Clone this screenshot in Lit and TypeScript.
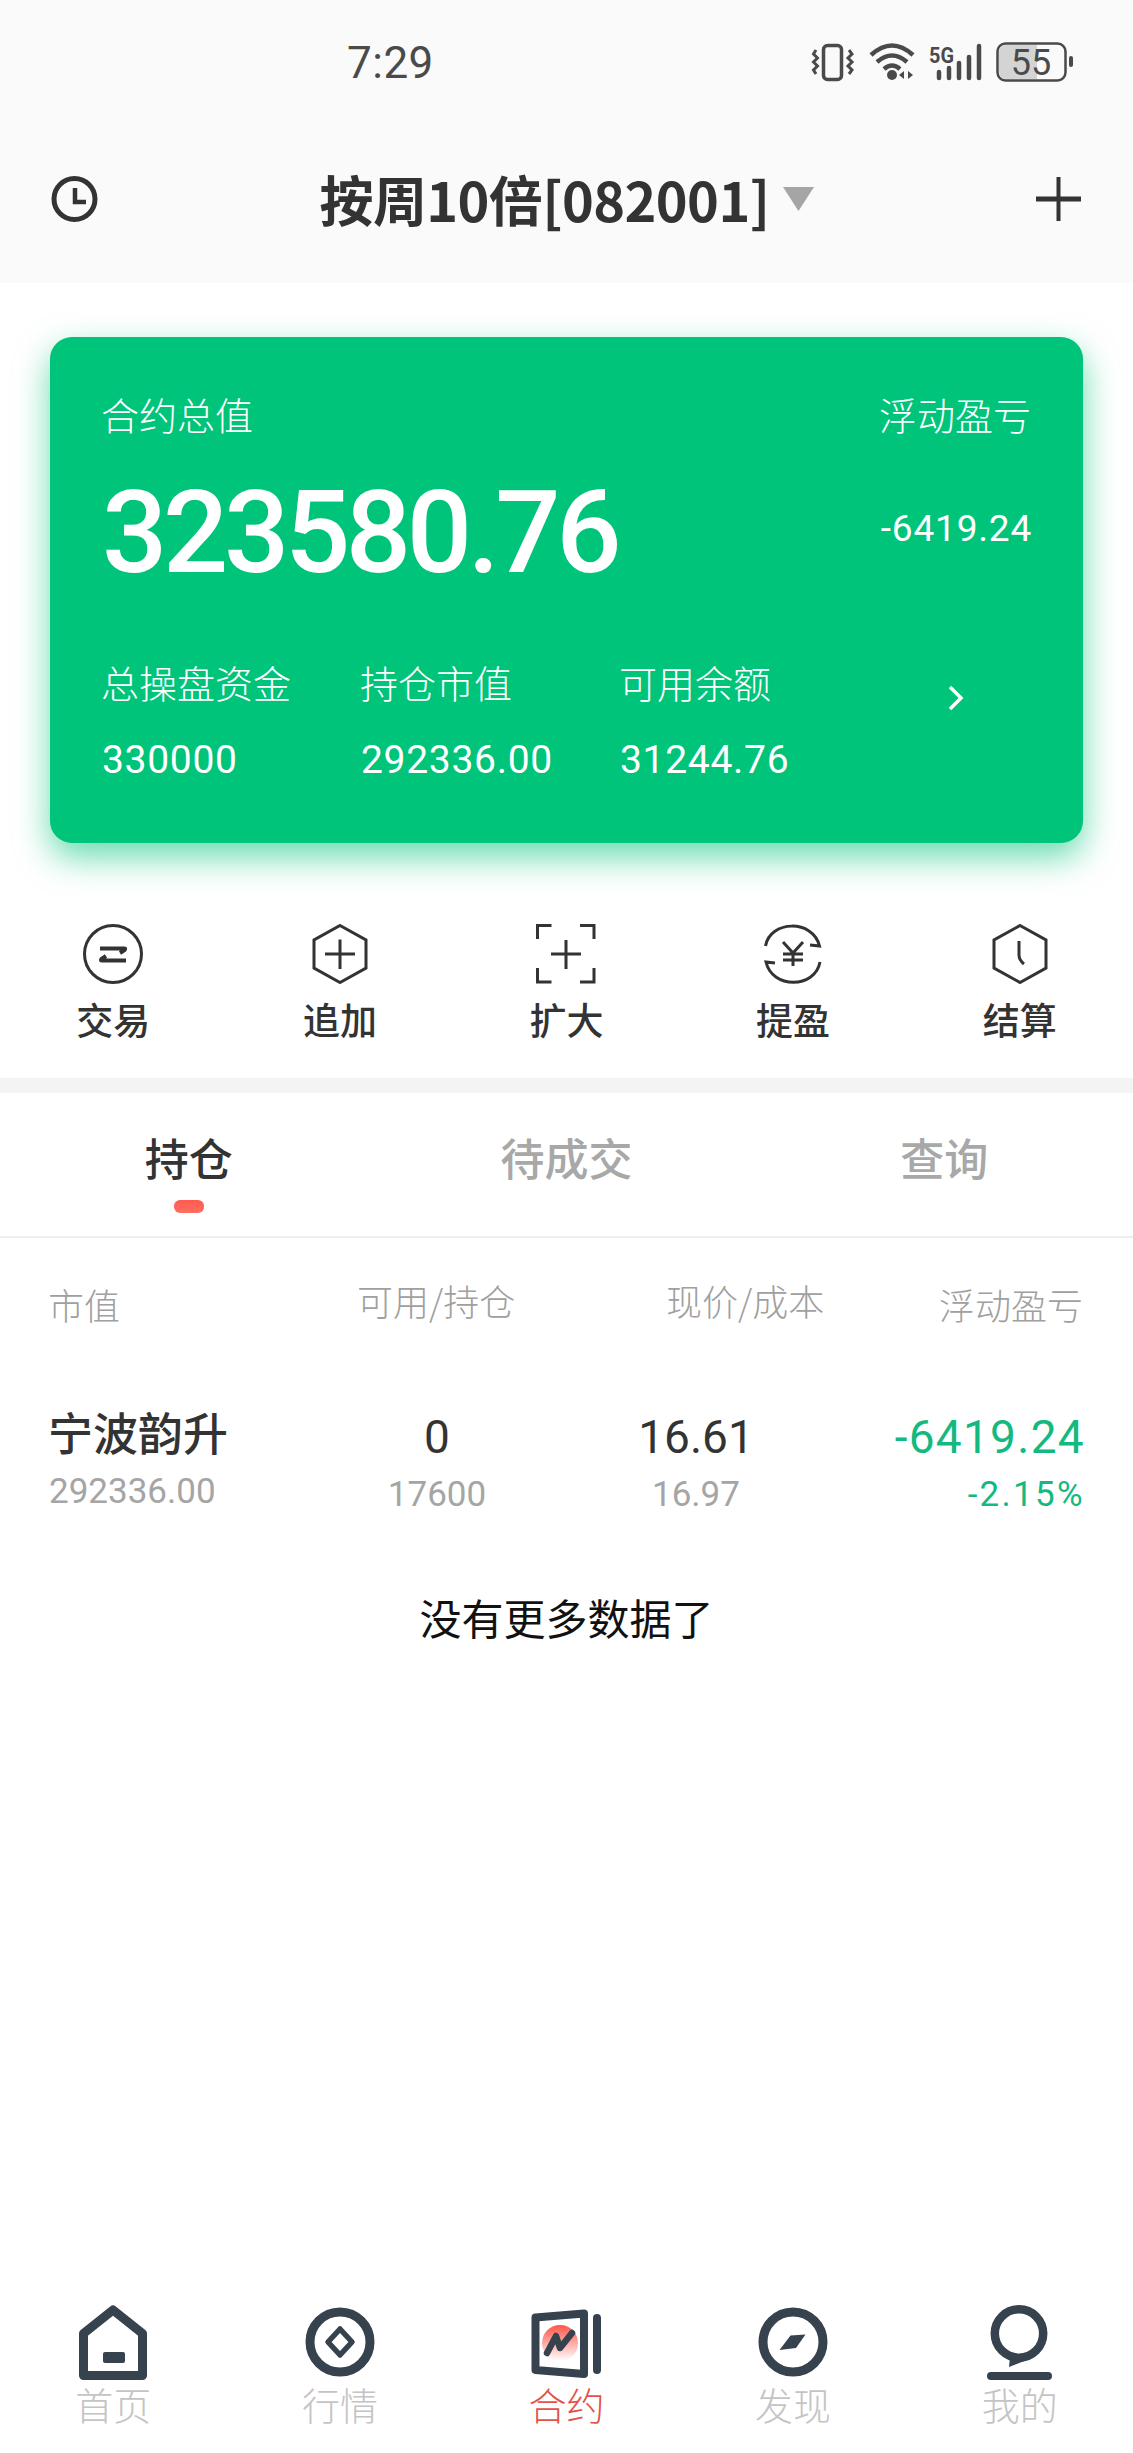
import { LitElement, html, css, svg } from "lit";
import { customElement } from "lit/decorators.js";

const hex = "M30 1.5 L56 16 V44 L30 58.5 L4 44 V16 Z";

const actionIcons = [
  svg`<circle cx="30" cy="30" r="28.5"/><path stroke-width="4" d="M17 24.5H41.5Q43 24.5 41 26.5L37 29"/><path stroke-width="4" d="M43 36.5H19Q17 36.5 19 34.5L23 32"/>`,
  svg`<path d="${hex}"/><path d="M30 15.5V45M15 30H45"/>`,
  svg`<path d="M1.5 15V1.5H15.5M44 1.5H58V15M1.500 44V58H15.5M44 58H58V44M30 16V45M15 30H45"/>`,
  svg`<path d="M2.5 22C7 -4 50 -5 56.5 22L47 21"/><path d="M57 38C52 65 9 65 3 38L12 39"/><path d="M20 18L30 29L40 18M20 30H40M20 36H40M30 29V42"/>`,
  svg`<path d="${hex}"/><path d="M29 17V31Q29 36 34 40"/>`,
];

const navIcons = [
  svg`<svg class="nav-svg" width="68" height="75" viewBox="0 0 68 75"><path fill="none" stroke="#36424d" stroke-width="9" stroke-linejoin="round" d="M4.5 70.5V28.5L34 5L63.5 28.5V70.5Z"/><rect x="24" y="47" width="22" height="11" rx="2" fill="#36424d"/></svg>`,
  svg`<svg class="nav-svg" width="70" height="75" viewBox="0 0 70 75"><circle cx="35" cy="37" r="30" fill="none" stroke="#36424d" stroke-width="9"/><path d="M35 24L47 37L35 50L23 37Z" fill="none" stroke="#36424d" stroke-width="5.5" stroke-linejoin="round"/></svg>`,
  svg`<svg class="nav-svg" width="70" height="75" viewBox="0 0 70 75"><defs><linearGradient id="nf" x1="0" y1="0" x2="0" y2="1"><stop offset="0" stop-color="#ff5548"/><stop offset="1" stop-color="#fff"/></linearGradient></defs><path fill="none" stroke="#36424d" stroke-width="8" stroke-linejoin="round" d="M4.5 12.5L53 8.5V69L4.5 65Z"/><rect x="62" y="9" width="8" height="60" rx="4" fill="#36424d"/><circle cx="29" cy="38" r="18" fill="url(#nf)"/><path fill="none" stroke="#36424d" stroke-width="6.5" stroke-linecap="round" stroke-linejoin="round" d="M16 48L25 31L29 43L41 28"/></svg>`,
  svg`<svg class="nav-svg" width="70" height="75" viewBox="0 0 70 75"><circle cx="35" cy="37" r="30" fill="none" stroke="#36424d" stroke-width="9"/><path fill="#36424d" d="M32.5 30.5L47.5 29.5L38 43L21.5 45Z"/></svg>`,
  svg`<svg class="nav-svg" width="65" height="75" viewBox="0 0 65 75"><circle cx="32" cy="28.5" r="24.2" fill="none" stroke="#36424d" stroke-width="8.5"/><path fill="#36424d" d="M23 52L22 62L40 55Z"/><rect x="0" y="67" width="65" height="8" rx="4" fill="#36424d"/></svg>`,
];

@customElement("app-root")
export class AppRoot extends LitElement {
  static styles = css`
    :host {
      display: flex;
      flex-direction: column;
      width: 1133px;
      height: 2453px;
      overflow: hidden;
      background: #fff;
      font-family: Roboto, "Noto Sans CJK SC", sans-serif;
      color: #333;
    }
    .head { background: #fafafa; height: 283px; flex: none; }
    .status { display: flex; height: 126px; padding: 41px 58px 0 347px; box-sizing: border-box; }
    .time { font-size: 44px; line-height: 44px; font-weight: 400; color: #4a4a4a; letter-spacing: 0.5px; }
    .status-icons { margin: -1px 0 0 auto; }
    .title-row { display: flex; align-items: center; justify-content: space-between; height: 146px; padding: 0 52px 0 51px; }
    .title-wrap { display: flex; align-items: center; gap: 14px; }
    .title { font-family: "Noto Sans CJK SC", sans-serif; font-size: 54px; line-height: 60px; font-weight: 700; color: #333; letter-spacing: -0.6px; }
    .card {
      margin: 54px 50px 0;
      flex: none;
      padding: 58px 51px 63px 52px;
      background: #00c47a;
      border-radius: 22px;
      box-shadow: 0 14px 34px rgba(0, 196, 122, 0.6);
      color: #fff;
    }
    .card .lbl { font-family: "Noto Sans CJK SC", sans-serif; font-size: 38px; line-height: 38px; font-weight: 300; margin: 0 1px 0 -1px; }
    .card .row { display: flex; justify-content: space-between; }
    .big-row { display: flex; justify-content: space-between; align-items: center; margin-top: 42px; }
    .big { font-size: 115px; line-height: 115px; letter-spacing: -4.4px; font-weight: 500; }
    .float { font-size: 37px; line-height: 37px; letter-spacing: 0.8px; margin-bottom: 8px; font-weight: 400; }
    .stats { display: grid; grid-template-columns: 259px 259px 259px 1fr; grid-template-rows: 38px 39px; row-gap: 40px; margin-top: 73px; }
    .val { font-size: 39px; line-height: 39px; letter-spacing: 0.7px; font-weight: 400; }
    .chev { grid-row: 1 / 3; grid-column: 4; justify-self: center; margin-top: 22px; }
    .actions { display: grid; grid-template-columns: repeat(5, 1fr); padding: 81px 0 40px; flex: none; }
    .action { display: flex; flex-direction: column; align-items: center; gap: 17px; }
    .action svg { fill: none; stroke: #333; stroke-width: 3; display: block; }
    .action span { font-family: "Noto Sans CJK SC", sans-serif; font-size: 37px; line-height: 37px; font-weight: 500; color: #333; }
    .band { height: 15px; background: #f4f4f4; flex: none; }
    .tabs { display: grid; grid-template-columns: repeat(3, 1fr); padding: 42px 0 23px; border-bottom: 2px solid #eee; flex: none; }
    .tab { display: flex; flex-direction: column; align-items: center; font-family: "Noto Sans CJK SC", sans-serif; font-size: 44px; line-height: 44px; font-weight: 500; color: #a8a8a8; }
    .tab.on { color: #333; }
    .mark { width: 30px; height: 13px; margin-top: 21px; border-radius: 6px; background: linear-gradient(#ff5a50, #ff6f62); }
    .spacer { height: 13px; margin-top: 21px; }
    .thead { display: grid; grid-template-columns: 309px 309px 273px 1fr; padding: 44px 49px 0 48px; flex: none; font-family: "Noto Sans CJK SC", sans-serif; font-size: 36px; line-height: 36px; font-weight: 300; color: #a0a0a0; }
    .thead .low { margin-top: 4px; }
    .trow { display: grid; grid-template-columns: 258px 260px 258px 1fr; padding: 89px 49px 0; flex: none; }
    .cell { display: flex; flex-direction: column; align-items: center; padding-top: 3px; }
    .cell.end { align-items: flex-end; }
    .name-cell { display: flex; flex-direction: column; }
    .name { font-family: "Noto Sans CJK SC", sans-serif; font-size: 45px; line-height: 45px; font-weight: 500; color: #333; margin: -2px 0 0 -1px; }
    .sub { font-size: 35px; line-height: 35px; color: #a5a5a5; font-weight: 400; }
    .name-cell .sub { margin-top: 20px; }
    .main { font-size: 46px; line-height: 46px; color: #333; font-weight: 400; }
    .cell .sub { margin-top: 17px; }
    .green { color: #13b97f; letter-spacing: 1.3px; margin-right: -1px; }
    .sub.green { letter-spacing: 2.3px; }
    .more { text-align: center; font-family: "Noto Sans CJK SC", sans-serif; font-size: 42px; line-height: 42px; color: #111; margin-top: 84px; flex: none; }
    .nav { display: grid; grid-template-columns: repeat(5, 1fr); margin-top: auto; padding-bottom: 30px; flex: none; }
    .nav-item { display: flex; flex-direction: column; align-items: center; }
    .nav-item span { font-family: "Noto Sans CJK SC", sans-serif; font-size: 38px; line-height: 38px; font-weight: 300; color: #c4c4c4; margin-top: 5px; }
    .nav-item.on span { color: #e2534a; }
    .nav-svg { display: block; }
  `;

  render() {
    const actions = ["交易", "追加", "扩大", "提盈", "结算"];
    const nav = ["首页", "行情", "合约", "发现", "我的"];
    return html`
      <div class="head">
        <div class="status">
          <div class="time">7:29</div>
          <svg class="status-icons" width="265" height="45" viewBox="810 40 265 45">
            <g fill="none" stroke="#4a4a4a">
              <rect x="823.5" y="45.5" width="18" height="34" rx="4" stroke-width="3.5"/>
              <path stroke-width="3" d="M816 50L813.5 54L817.5 58L813.5 62L817.5 66L813.5 70L816 74M849 50L852 54L848 58L852 62L848 66L852 70L849 74"/>
              <path stroke-width="4.5" d="M871 55Q892 36 913 55M877 62Q892 49 907 62M884 69Q892 62 900 69"/>
              <path stroke-width="4.5" stroke-linecap="round" d="M939 72V78M949 68V78M959 63V78M969 57V78M979 46V78"/>
              <rect x="997.5" y="43.5" width="68" height="37" rx="8" stroke-width="2.5"/>
            </g>
            <path d="M999 52a7 7 0 0 1 7-7H1037V79H1006a7 7 0 0 1-7-7Z" fill="#d4d4d4"/>
            <circle cx="892" cy="75" r="5" fill="#4a4a4a"/>
            <path d="M904 71V79L899 75ZM908 71V79L913 75Z" fill="#4a4a4a"/>
            <rect x="1069" y="56" width="4" height="11" rx="2" fill="#4a4a4a"/>
            <text x="929" y="63" font-family="Roboto" font-weight="700" font-size="22" textLength="25" lengthAdjust="spacingAndGlyphs" fill="#4a4a4a">5G</text>
            <text x="1031" y="75" text-anchor="middle" font-family="Roboto" font-size="36" fill="#4a4a4a">55</text>
          </svg>
        </div>
        <div class="title-row">
          <svg width="47" height="46" viewBox="0 0 47 46" fill="none" stroke="#333" stroke-width="5"><circle cx="23.5" cy="23" r="20.5"/><path stroke-width="4.5" d="M24 12V26H35"/></svg>
          <div class="title-wrap">
            <span class="title">按周10倍[082001]</span>
            <svg width="31" height="24" viewBox="0 0 31 24"><path d="M0 0H31L15.5 24Z" fill="#a5a5a5"/></svg>
          </div>
          <svg width="45" height="44" viewBox="0 0 45 44" fill="none" stroke="#333"><path stroke-width="4" d="M22.500 0V44"/><path stroke-width="5" d="M0 22H45"/></svg>
        </div>
      </div>

      <div class="card">
        <div class="row"><span class="lbl">合约总值</span><span class="lbl">浮动盈亏</span></div>
        <div class="big-row"><span class="big">323580.76</span><span class="float">-6419.24</span></div>
        <div class="stats">
          <span class="lbl">总操盘资金</span><span class="lbl">持仓市值</span><span class="lbl">可用余额</span>
          <svg class="chev" width="18" height="26" viewBox="0 0 18 26" fill="none" stroke="#fff" stroke-width="3.500"><path d="M3 2L14 13L3 24"/></svg>
          <span class="val">330000</span><span class="val">292336.00</span><span class="val">31244.76</span>
        </div>
      </div>

      <div class="actions">
        ${actions.map((a, i) => html`<div class="action"><svg width="60" height="60" viewBox="0 0 60 60">${actionIcons[i]}</svg><span>${a}</span></div>`)}
      </div>
      <div class="band"></div>

      <div class="tabs">
        <div class="tab on">持仓<div class="mark"></div></div>
        <div class="tab">待成交<div class="spacer"></div></div>
        <div class="tab">查询<div class="spacer"></div></div>
      </div>

      <div class="thead">
        <span class="low">市值</span><span>可用/持仓</span><span>现价/成本</span><span class="low">浮动盈亏</span>
      </div>

      <div class="trow">
        <div class="name-cell"><span class="name">宁波韵升</span><span class="sub">292336.00</span></div>
        <div class="cell"><span class="main">0</span><span class="sub">17600</span></div>
        <div class="cell"><span class="main">16.61</span><span class="sub">16.97</span></div>
        <div class="cell end"><span class="main green">-6419.24</span><span class="sub green">-2.15%</span></div>
      </div>

      <div class="more">没有更多数据了</div>

      <div class="nav">
        ${nav.map((n, i) => html`<div class="nav-item ${i === 2 ? "on" : ""}">${navIcons[i]}<span>${n}</span></div>`)}
      </div>
    `;
  }
}
